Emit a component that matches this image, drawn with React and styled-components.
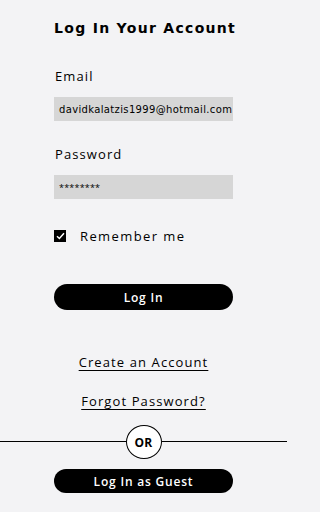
import React from "react";
import styled, { createGlobalStyle } from "styled-components";

const Global = createGlobalStyle`
  html, body { margin: 0; padding: 0; background: #f3f3f5; }
  body { font-family: "Open Sans", sans-serif; color: #000; }
  * { box-sizing: border-box; }
`;

const Page = styled.div`
  width: 287px;
  height: 512px;
  display: flex;
  flex-direction: column;
  align-items: center;
  padding-top: 18px;
`;

const Form = styled.div`
  width: 179px;
  display: flex;
  flex-direction: column;
`;

const Title = styled.h1`
  margin: 0;
  font-family: "DejaVu Sans", sans-serif;
  font-weight: bold;
  font-size: 14px;
  line-height: 20px;
  letter-spacing: 1.3px;
  white-space: nowrap;
`;

const Label = styled.div`
  margin-top: ${(p) => p.$mt}px;
  font-family: "Open Sans", sans-serif;
  font-size: 13px;
  line-height: 18px;
  letter-spacing: 1.1px;
  padding-left: 1px;
`;

const Field = styled.div`
  margin-top: 12px;
  height: 24px;
  background: #d6d6d6;
  display: flex;
  align-items: center;
  padding-left: 5px;
  font-family: ${(p) => (p.$secret ? '"Open Sans", sans-serif' : '"DejaVu Sans", sans-serif')};
  font-size: ${(p) => (p.$secret ? "9px" : "10px")};
  letter-spacing: ${(p) => (p.$secret ? "0.2px" : "0.35px")};
  white-space: nowrap;
  overflow: hidden;
`;

const CheckRow = styled.div`
  margin-top: 28px;
  height: 18px;
  display: flex;
  align-items: center;
  gap: 14px;
`;

const Box = styled.span`
  width: 12px;
  height: 12px;
  background: #000;
  display: flex;
  align-items: center;
  justify-content: center;
`;

const CheckLabel = styled.span`
  font-size: 13px;
  letter-spacing: 1.4px;
  line-height: 18px;
`;

const PillButton = styled.button`
  margin-top: ${(p) => p.$mt}px;
  width: 179px;
  height: ${(p) => p.$h}px;
  border: none;
  border-radius: 999px;
  background: #000;
  color: #fff;
  font-family: "Open Sans", sans-serif;
  font-weight: 600;
  font-size: 12px;
  letter-spacing: 0.8px;
  display: flex;
  align-items: center;
  justify-content: center;
  padding: 0;
`;

const TextLink = styled.a`
  margin-top: ${(p) => p.$mt}px;
  align-self: center;
  font-size: 13px;
  line-height: 18px;
  letter-spacing: 1.1px;
  color: #000;
  text-decoration: underline;
  text-underline-offset: 3px;
  text-decoration-thickness: 1px;
`;

const Divider = styled.div`
  margin-top: 15px;
  width: 287px;
  height: 34px;
  display: flex;
  align-items: center;
`;

const Line = styled.div`
  flex: 1;
  height: 1.5px;
  background: #000;
  margin-top: -1px;
`;

const OrCircle = styled.div`
  width: 36px;
  height: 34px;
  border: 1.5px solid #000;
  border-radius: 50%;
  background: #fff;
  display: flex;
  align-items: center;
  justify-content: center;
  font-weight: 700;
  font-size: 12px;
  letter-spacing: 0.3px;
`;

export default function App() {
  return (
    <>
      <Global />
      <Page>
        <Form>
          <Title>Log In Your Account</Title>
          <Label $mt={29}>Email</Label>
          <Field>davidkalatzis1999@hotmail.com</Field>
          <Label $mt={24}>Password</Label>
          <Field $secret>********</Field>
          <CheckRow>
            <Box>
              <svg width="9" height="8" viewBox="0 0 9 8">
                <path d="M1 4.2 L3.4 6.5 L8 1.2" stroke="#fff" strokeWidth="1.5" fill="none" />
              </svg>
            </Box>
            <CheckLabel>Remember me</CheckLabel>
          </CheckRow>
          <PillButton $mt={39} $h={26}>Log In</PillButton>
          <TextLink $mt={43}>Create an Account</TextLink>
          <TextLink $mt={21}>Forgot Password?</TextLink>
        </Form>
        <Divider>
          <Line />
          <OrCircle>OR</OrCircle>
          <Line />
        </Divider>
        <Form>
          <PillButton $mt={10} $h={24}>Log In as Guest</PillButton>
        </Form>
      </Page>
    </>
  );
}
